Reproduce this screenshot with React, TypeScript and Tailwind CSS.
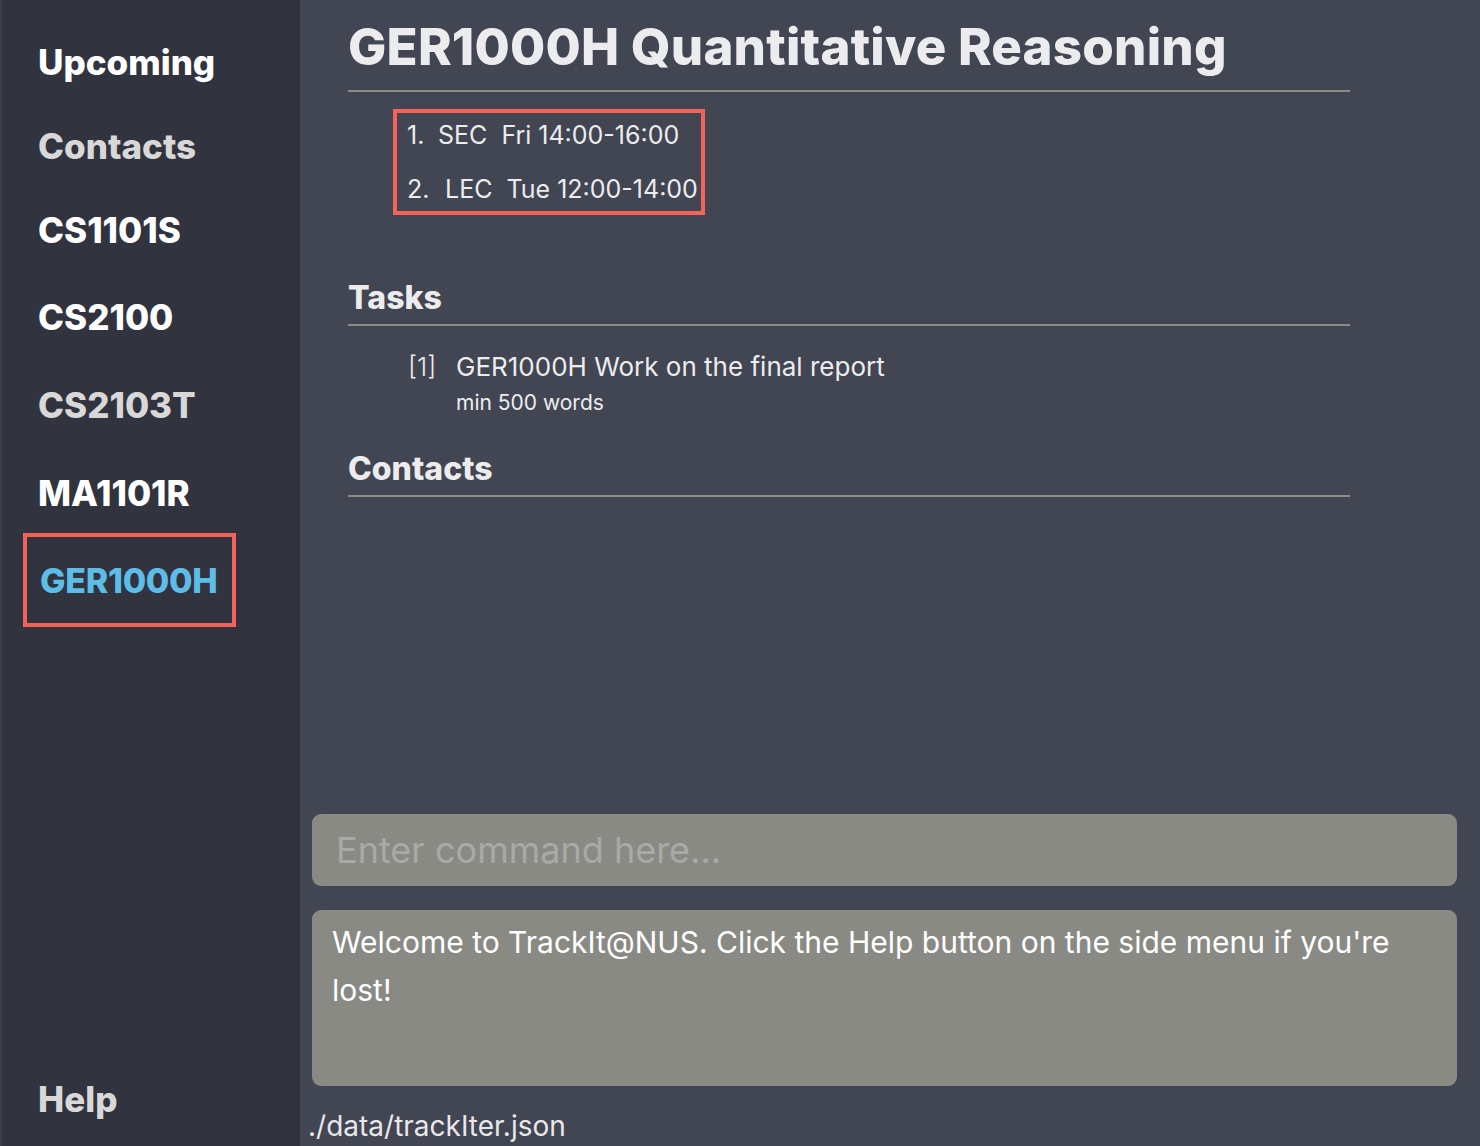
const font = "font-['Inter','Liberation_Sans',sans-serif]";

const navItems = [
  { label: "Upcoming", color: "text-white", h: "h-[84px]" },
  { label: "Contacts", color: "text-[#d8d8d8]", h: "h-[84px]" },
  { label: "CS1101S", color: "text-white", h: "h-[85px]" },
  { label: "CS2100", color: "text-white", h: "h-[88px]" },
  { label: "CS2103T", color: "text-[#d8d8d8]", h: "h-[88px]" },
  { label: "MA1101R", color: "text-white", h: "h-[88px]" },
];

function Sidebar() {
  return (
    <aside className="w-[300px] shrink-0 bg-[#31333f] border-l-2 border-[#3c3e4a] flex flex-col pt-[20px] pb-[21px]">
      {navItems.map((item) => (
        <div key={item.label} className={`${item.h} flex items-center pl-[36px]`}>
          <span className={`${item.color} text-[35px] font-extrabold`}>{item.label}</span>
        </div>
      ))}
      {/* selected module */}
      <div className="ml-[21px] mt-[-4px] w-[213px] h-[94px] border-[4px] border-[#f4645a] flex items-center pl-[13px]">
        <span className="text-[#5dbde6] text-[34px] font-extrabold tracking-[-0.3px]">GER1000H</span>
      </div>
      <div className="mt-auto pl-[36px]">
        <span className="text-[#d8d8d8] text-[35px] font-extrabold">Help</span>
      </div>
    </aside>
  );
}

function SectionHeading({ children }: { children: React.ReactNode }) {
  return (
    <div className="border-b-2 border-[#8c8c88] pb-[6px]">
      <h2 className="text-[#ececef] text-[32px] font-extrabold leading-[40px]">{children}</h2>
    </div>
  );
}

function ModuleView() {
  return (
    <div className="flex-1 pl-[48px] pr-[130px]">
      <div className="border-b-2 border-[#8c8c88] pt-[14px] pb-[10px]">
        <h1 className="text-[#ececef] text-[51px] font-extrabold leading-[66px] tracking-[0.2px]">
          GER1000H Quantitative Reasoning
        </h1>
      </div>

      <div className="ml-[45px] mt-[17px] w-[312px] h-[106px] border-[4px] border-[#f4645a] flex flex-col justify-center gap-[18px] pl-[10px] text-[#ececef] text-[25px] leading-[36px]">
        <div className="flex leading-[36px]">
          <span className="w-[31px]">1.</span>
          <span>SEC&nbsp; Fri 14:00-16:00</span>
        </div>
        <div className="flex leading-[36px]">
          <span className="w-[38px]">2.</span>
          <span>LEC&nbsp; Tue 12:00-14:00</span>
        </div>
      </div>

      <div className="mt-[63px]">
        <SectionHeading>Tasks</SectionHeading>
      </div>
      <div className="flex pl-[60px] pt-[23px] text-[#ececef]">
        <span className="w-[48px] text-[26px] leading-[36px] font-light">[1]</span>
        <div>
          <div className="text-[26px] leading-[36px]">GER1000H Work on the final report</div>
          <div className="text-[21px] leading-[32px] mt-[2px]">min 500 words</div>
        </div>
      </div>

      <div className="mt-[30px]">
        <SectionHeading>Contacts</SectionHeading>
      </div>
    </div>
  );
}

export default function App() {
  return (
    <div className={`${font} flex w-[1480px] h-[1146px] overflow-hidden`}>
      <Sidebar />
      <main className="flex-1 bg-[#424552] flex flex-col">
        <ModuleView />
        <div className="pl-[12px] pr-[23px]">
          <div className="h-[72px] rounded-[9px] bg-[#8a8a85] flex items-center px-[24px]">
            <span className="text-[#a9a9a5] text-[36px]">Enter command here...</span>
          </div>
          <div className="mt-[24px] h-[176px] rounded-[9px] bg-[#8a8a85] px-[20px] pt-[8px] text-white text-[30px] leading-[48px]">
            Welcome to TrackIt@NUS. Click the Help button on the side menu if you're lost!
          </div>
        </div>
        <div className="h-[60px] flex items-center pl-[8px] pt-[20px] text-[#e8e8ec] text-[28px]">
          ./data/trackIter.json
        </div>
      </main>
    </div>
  );
}
